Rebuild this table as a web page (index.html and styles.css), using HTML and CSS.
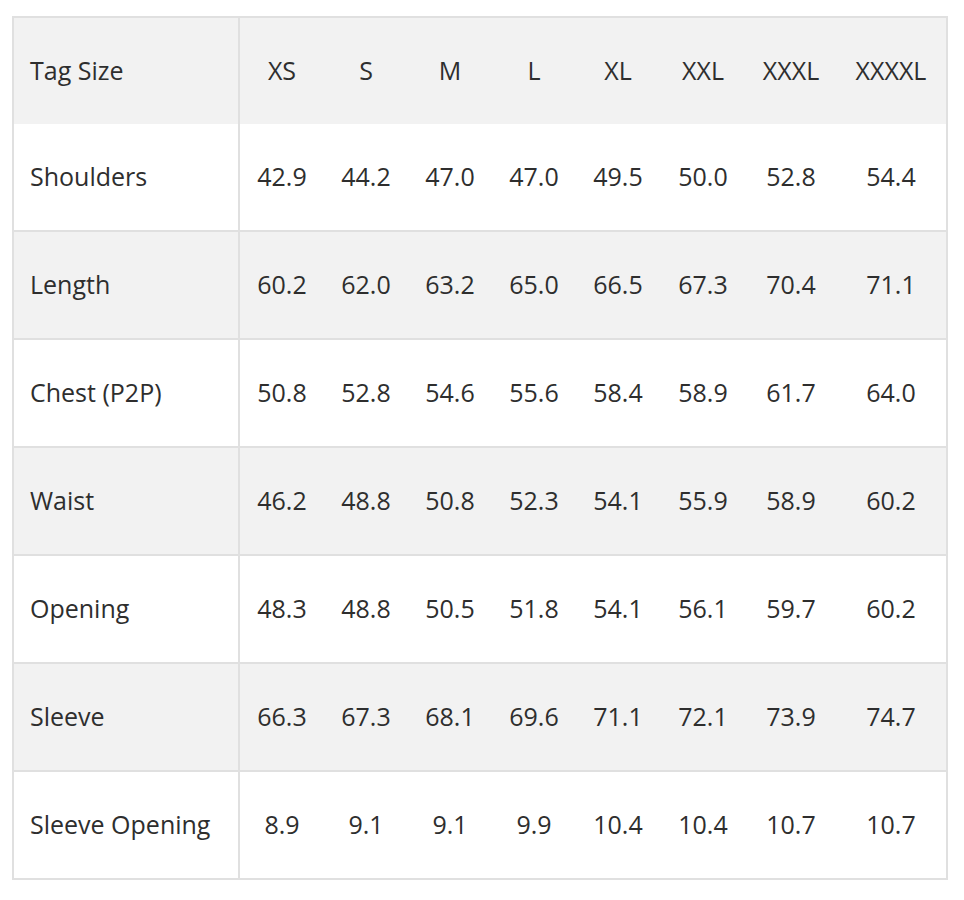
FILE: index.html
```html
<!DOCTYPE html>
<html lang="en">
<head>
<meta charset="utf-8">
<title>Size Chart</title>
<link rel="stylesheet" href="styles.css">
</head>
<body>
<table class="size-table">
  <tbody>
    <tr class="row row-head">
      <td class="label">Tag Size</td>
      <td>XS</td><td>S</td><td>M</td><td>L</td><td>XL</td><td>XXL</td><td>XXXL</td><td>XXXXL</td>
    </tr>
    <tr class="row row-light">
      <td class="label">Shoulders</td>
      <td>42.9</td><td>44.2</td><td>47.0</td><td>47.0</td><td>49.5</td><td>50.0</td><td>52.8</td><td>54.4</td>
    </tr>
    <tr class="row row-grey">
      <td class="label">Length</td>
      <td>60.2</td><td>62.0</td><td>63.2</td><td>65.0</td><td>66.5</td><td>67.3</td><td>70.4</td><td>71.1</td>
    </tr>
    <tr class="row row-light">
      <td class="label">Chest (P2P)</td>
      <td>50.8</td><td>52.8</td><td>54.6</td><td>55.6</td><td>58.4</td><td>58.9</td><td>61.7</td><td>64.0</td>
    </tr>
    <tr class="row row-grey">
      <td class="label">Waist</td>
      <td>46.2</td><td>48.8</td><td>50.8</td><td>52.3</td><td>54.1</td><td>55.9</td><td>58.9</td><td>60.2</td>
    </tr>
    <tr class="row row-light">
      <td class="label">Opening</td>
      <td>48.3</td><td>48.8</td><td>50.5</td><td>51.8</td><td>54.1</td><td>56.1</td><td>59.7</td><td>60.2</td>
    </tr>
    <tr class="row row-grey">
      <td class="label">Sleeve</td>
      <td>66.3</td><td>67.3</td><td>68.1</td><td>69.6</td><td>71.1</td><td>72.1</td><td>73.9</td><td>74.7</td>
    </tr>
    <tr class="row row-light row-last">
      <td class="label">Sleeve Opening</td>
      <td>8.9</td><td>9.1</td><td>9.1</td><td>9.9</td><td>10.4</td><td>10.4</td><td>10.7</td><td>10.7</td>
    </tr>
  </tbody>
</table>
</body>
</html>
```
FILE: styles.css
```css
html, body {
  margin: 0;
  padding: 0;
  background: #ffffff;
}

body {
  font-family: "Open Sans", "Noto Sans", sans-serif;
  font-size: 25px;
  color: #2e2e2e;
}

.size-table {
  margin: 16px 0 0 12px;
  width: 936px;
  table-layout: fixed;
  border-collapse: separate;
  border-spacing: 0;
  border: 2px solid #e0e0e0;
}

.size-table td {
  box-sizing: border-box;
  height: 106px;
  padding: 0 0 2px 0;
  text-align: center;
  vertical-align: middle;
  white-space: nowrap;
  line-height: 1;
}

.row-head td,
.row-grey td {
  background: #f2f2f2;
}

.row-light td {
  background: #ffffff;
}

.row-light td,
.row-grey td {
  height: 108px;
  border-bottom: 2px solid #e0e0e0;
}

.row-last td {
  height: 106px;
  border-bottom: 0;
}

.size-table td.label {
  width: 226px;
  text-align: left;
  padding-left: 16px;
  border-right: 2px solid #e0e0e0;
}

.size-table td:nth-child(2),
.size-table td:nth-child(3),
.size-table td:nth-child(4),
.size-table td:nth-child(5),
.size-table td:nth-child(6) {
  width: 84px;
}

.size-table td:nth-child(7) {
  width: 86px;
}

.size-table td:nth-child(8) {
  width: 90px;
}

.size-table td:nth-child(9) {
  width: 110px;
}
```
